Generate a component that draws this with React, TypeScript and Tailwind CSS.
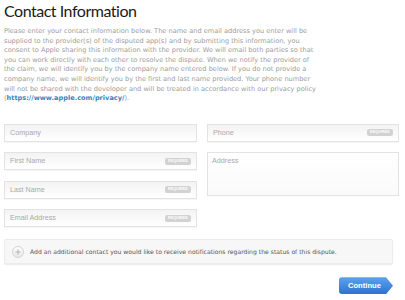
import { Plus } from 'lucide-react';

const Badge = () => (
  <span className="flex h-[7px] w-[26px] items-center justify-center rounded-[2px] bg-[#d2d2d2] text-[3.6px] font-bold tracking-[0.04em] text-white">
    REQUIRED
  </span>
);

const Field = ({ label, required }: { label: string; required?: boolean }) => (
  <div className="flex h-[18px] shrink-0 items-center justify-between border border-[#e3e3e3] bg-gradient-to-b from-[#f3f3f3] to-white pl-[5px] pr-[5px] shadow-[0_1px_0_#f6f6f6]">
    <span className="text-[7.2px] leading-[10px] text-[#a9a9a9]">{label}</span>
    {required && <Badge />}
  </div>
);

const lines = [
  'Please enter your contact information below. The name and email address you enter will be',
  'supplied to the provider(s) of the disputed app(s) and by submitting this information, you',
  'consent to Apple sharing this information with the provider. We will email both parties so that',
  'you can work directly with each other to resolve the dispute. When we notify the provider of',
  'the claim, we will identify you by the company name entered below. If you do not provide a',
  'company name, we will identify you by the first and last name provided. Your phone number',
  'will not be shared with the developer and will be treated in accordance with our privacy policy',
];

const App = () => {
  return (
    <div className="h-[300px] w-[405px] overflow-hidden bg-white font-['Liberation_Sans',sans-serif]">
      <h1 className="pl-[4px] pt-[1px] font-['Lato',sans-serif] text-[16px] leading-[19px] tracking-[-0.03em] text-[#1a1a1a]">
        Contact Information
      </h1>
      <p className="mt-[7px] whitespace-nowrap pl-[4px] font-['DejaVu_Sans',sans-serif] text-[6.6px] leading-[9.6px] text-[#9c9c9c]">
        {lines.map((l) => (
          <span key={l} className="block">
            {l}
          </span>
        ))}
        <span className="block">
          (<span className="font-bold text-[#3a83b8]">https://www.apple.com/privacy/</span>).
        </span>
      </p>

      <div className="mt-[20px] flex gap-[10px] pl-[4px] pr-[6px]">
        <div className="flex w-[193px] flex-col gap-[10.5px]">
          <Field label="Company" />
          <Field label="First Name" required />
          <Field label="Last Name" required />
          <Field label="Email Address" required />
        </div>
        <div className="flex flex-1 flex-col items-stretch gap-[10.5px]">
          <Field label="Phone" required />
          <div className="h-[44px] shrink-0 border border-[#e3e3e3] bg-gradient-to-b from-white to-[#fafafa] px-[4px] pt-[3px] text-[7.2px] leading-[10px] text-[#a9a9a9]">
            Address
          </div>
        </div>
      </div>

      <div className="ml-[4px] mt-[12px] flex h-[25px] w-[389px] items-center gap-[6px] rounded-[2px] border border-[#ececec] bg-[#f7f7f7] pl-[7px] shadow-[0_1px_1px_rgba(0,0,0,0.08)]">
        <span className="flex h-[12px] w-[12px] items-center justify-center rounded-full border border-[#d4d4d4] bg-gradient-to-b from-white to-[#e8e8e8]">
          <Plus className="h-[8px] w-[8px] text-[#9a9a9a]" strokeWidth={2} />
        </span>
        <span className="font-['DejaVu_Sans',sans-serif] text-[6.1px] text-[#555]">
          Add an additional contact you would like to receive notifications regarding the status of this dispute.
        </span>
      </div>

      <div className="mt-[13px] flex justify-end pr-[12px]">
        <button className="flex h-[17px] w-[54px] items-center justify-start rounded-l-[3px] bg-gradient-to-b from-[#5ea3ee] to-[#2b73d0] pl-[9px] text-[7.6px] font-bold text-white [clip-path:polygon(0_0,87%_0,100%_50%,87%_100%,0_100%)]">
          Continue
        </button>
      </div>
    </div>
  );
};

export default App;
